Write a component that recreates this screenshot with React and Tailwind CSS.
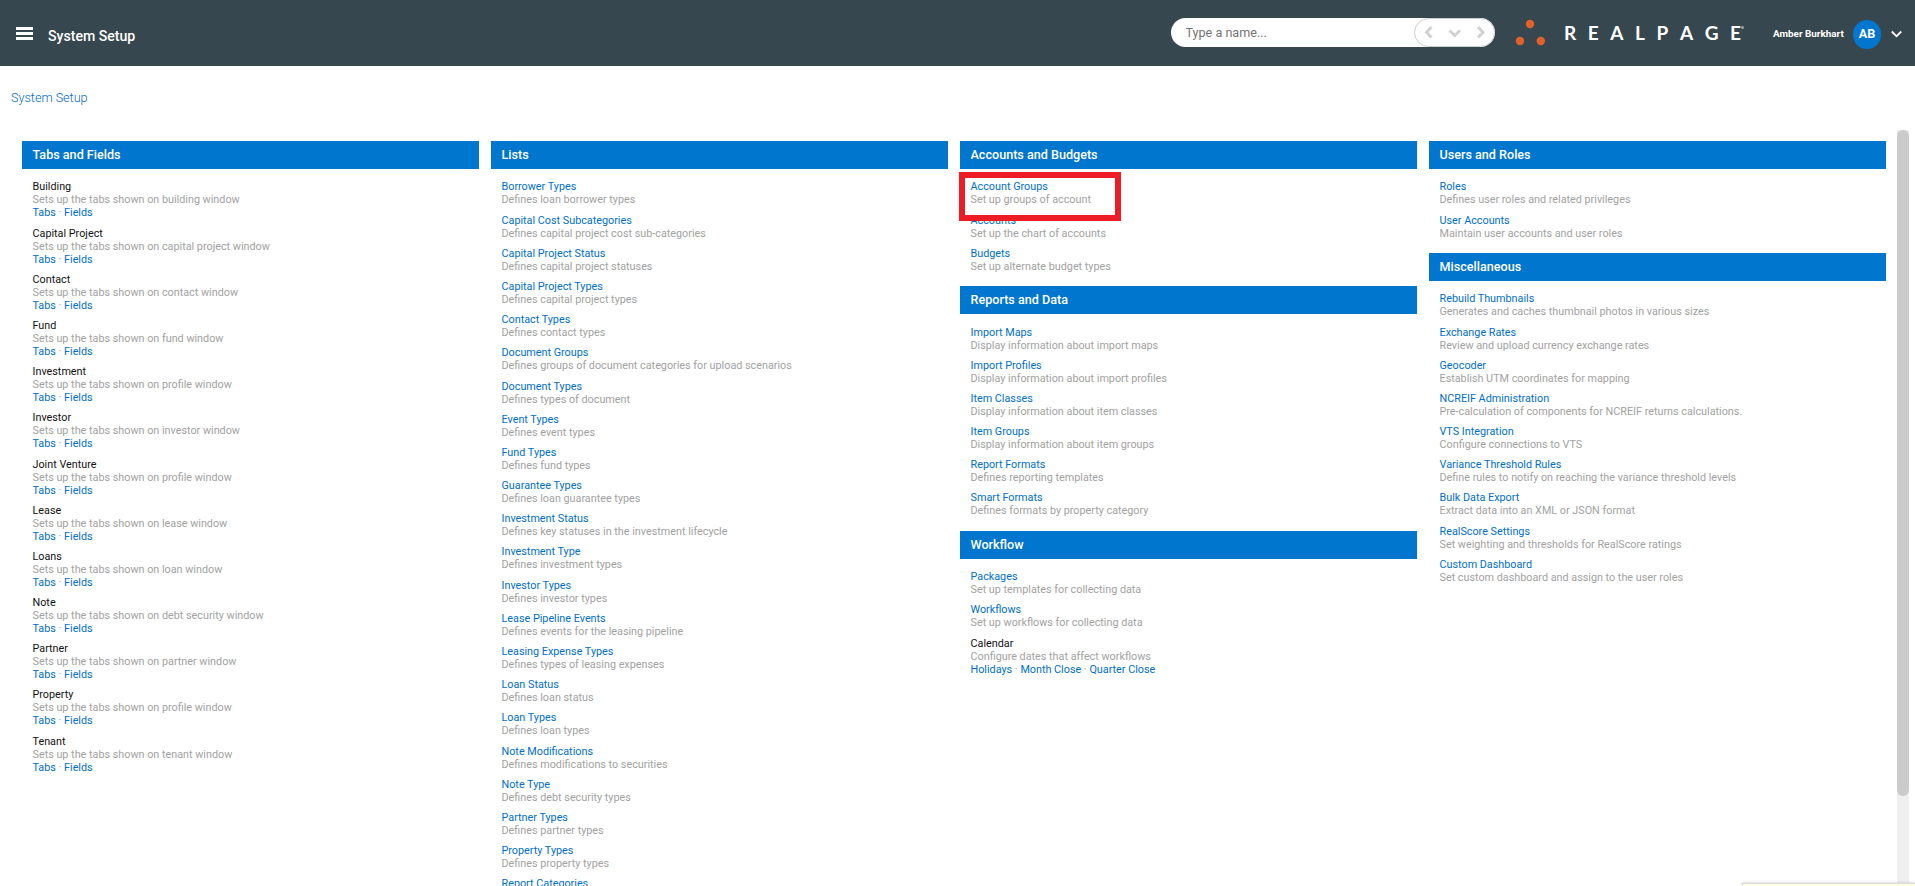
import { useState } from "react";

/* ---------- DATA ---------- */
const tabItem = (title, name) => ({
  title,
  text: `Sets up the tabs shown on ${name} window`,
  links: ["Tabs", "Fields"],
});

const columns = [
  [
    {
      name: "Tabs and Fields",
      items: [
        tabItem("Building", "building"),
        tabItem("Capital Project", "capital project"),
        tabItem("Contact", "contact"),
        tabItem("Fund", "fund"),
        tabItem("Investment", "profile"),
        tabItem("Investor", "investor"),
        tabItem("Joint Venture", "profile"),
        tabItem("Lease", "lease"),
        tabItem("Loans", "loan"),
        tabItem("Note", "debt security"),
        tabItem("Partner", "partner"),
        tabItem("Property", "profile"),
        tabItem("Tenant", "tenant"),
      ],
    },
  ],
  [
    {
      name: "Lists",
      items: [
        { title: "Borrower Types", text: "Defines loan borrower types" },
        { title: "Capital Cost Subcategories", text: "Defines capital project cost sub-categories" },
        { title: "Capital Project Status", text: "Defines capital project statuses" },
        { title: "Capital Project Types", text: "Defines capital project types" },
        { title: "Contact Types", text: "Defines contact types" },
        { title: "Document Groups", text: "Defines groups of document categories for upload scenarios" },
        { title: "Document Types", text: "Defines types of document" },
        { title: "Event Types", text: "Defines event types" },
        { title: "Fund Types", text: "Defines fund types" },
        { title: "Guarantee Types", text: "Defines loan guarantee types" },
        { title: "Investment Status", text: "Defines key statuses in the investment lifecycle" },
        { title: "Investment Type", text: "Defines investment types" },
        { title: "Investor Types", text: "Defines investor types" },
        { title: "Lease Pipeline Events", text: "Defines events for the leasing pipeline" },
        { title: "Leasing Expense Types", text: "Defines types of leasing expenses" },
        { title: "Loan Status", text: "Defines loan status" },
        { title: "Loan Types", text: "Defines loan types" },
        { title: "Note Modifications", text: "Defines modifications to securities" },
        { title: "Note Type", text: "Defines debt security types" },
        { title: "Partner Types", text: "Defines partner types" },
        { title: "Property Types", text: "Defines property types" },
        { title: "Report Categories" },
      ],
    },
  ],
  [
    {
      name: "Accounts and Budgets",
      items: [
        { title: "Account Groups", text: "Set up groups of account", marked: true },
        { title: "Accounts", text: "Set up the chart of accounts" },
        { title: "Budgets", text: "Set up alternate budget types" },
      ],
    },
    {
      name: "Reports and Data",
      items: [
        { title: "Import Maps", text: "Display information about import maps" },
        { title: "Import Profiles", text: "Display information about import profiles" },
        { title: "Item Classes", text: "Display information about item classes" },
        { title: "Item Groups", text: "Display information about item groups" },
        { title: "Report Formats", text: "Defines reporting templates" },
        { title: "Smart Formats", text: "Defines formats by property category" },
      ],
    },
    {
      name: "Workflow",
      items: [
        { title: "Packages", text: "Set up templates for collecting data" },
        { title: "Workflows", text: "Set up workflows for collecting data" },
        {
          title: "Calendar",
          text: "Configure dates that affect workflows",
          links: ["Holidays", "Month Close", "Quarter Close"],
        },
      ],
    },
  ],
  [
    {
      name: "Users and Roles",
      items: [
        { title: "Roles", text: "Defines user roles and related privileges" },
        { title: "User Accounts", text: "Maintain user accounts and user roles" },
      ],
    },
    {
      name: "Miscellaneous",
      items: [
        { title: "Rebuild Thumbnails", text: "Generates and caches thumbnail photos in various sizes" },
        { title: "Exchange Rates", text: "Review and upload currency exchange rates" },
        { title: "Geocoder", text: "Establish UTM coordinates for mapping" },
        { title: "NCREIF Administration", text: "Pre-calculation of components for NCREIF returns calculations." },
        { title: "VTS Integration", text: "Configure connections to VTS" },
        { title: "Variance Threshold Rules", text: "Define rules to notify on reaching the variance threshold levels" },
        { title: "Bulk Data Export", text: "Extract data into an XML or JSON format" },
        { title: "RealScore Settings", text: "Set weighting and thresholds for RealScore ratings" },
        { title: "Custom Dashboard", text: "Set custom dashboard and assign to the user roles" },
      ],
    },
  ],
];

function Item({ item }) {
  return (
    <li className="relative mb-[7.2px] whitespace-nowrap">
      {item.links ? (
        <div className="text-[#111]">{item.title}</div>
      ) : (
        <a href="#" className="block w-fit text-[#006fcb]">{item.title}</a>
      )}
      {item.text && <div className="text-[#a2a2a2]">{item.text}</div>}
      {item.links && (
        <div className="text-[#a2a2a2]">
          {item.links.map((link, i) => (
            <span key={link}>
              {i > 0 && " · "}
              <a href="#" className="text-[#006fcb]">{link}</a>
            </span>
          ))}
        </div>
      )}
      {item.marked && (
        <div className="absolute -left-[11.5px] -top-[8.4px] z-10 h-[49px] w-[162px] border-6 border-[#ed1c24]" />
      )}
    </li>
  );
}

function Section({ section }) {
  return (
    <section>
      <h2 className="h-7 bg-[#0076ce] pl-[10.5px] text-[12.6px] leading-[27px] font-medium text-white">
        {section.name}
      </h2>
      <ul className="pt-[11.4px] pb-[6.2px] pl-[10.5px] text-[10.8px] leading-[13px]">
        {section.items.map((item) => (
          <Item key={item.title} item={item} />
        ))}
      </ul>
    </section>
  );
}

function Header({ search, onSearch }) {
  return (
    <header className="flex h-[66px] shrink-0 items-start bg-[#37474f] text-white">
      <button className="mt-[27px] ml-4 flex w-[17px] flex-col gap-[2px]">
        <span className="h-[3px] w-full bg-white" />
        <span className="h-[3px] w-full bg-white" />
        <span className="h-[3px] w-full bg-white" />
      </button>
      <h1 className="mt-[26px] ml-[15px] text-[14.1px] leading-5 font-medium">System Setup</h1>

      {/* SEARCH */}
      <div className="mt-[18px] ml-auto flex h-[29px] w-[324px] overflow-hidden rounded-full bg-white">
        <input
          value={search}
          onChange={(e) => onSearch(e.target.value)}
          placeholder="Type a name..."
          className="w-[243px] pt-[2px] pl-[14.5px] text-[12.6px] text-gray-700 outline-none placeholder:text-[#757575]"
        />
        <div className="flex w-[81px] items-center rounded-full border border-[#ccc]">
          <svg className="h-full w-full" viewBox="0 0 79 27" fill="none" stroke="#d2d2d2" strokeWidth="3">
            <path d="M16.5 8 L11.5 13.2 L16.5 18.5" />
            <path d="M34.5 11.5 L39.7 16.5 L45 11.5" />
            <path d="M63 8 L68 13.2 L63 18.5" />
          </svg>
        </div>
      </div>

      {/* LOGO */}
      <svg className="mt-[19px] ml-[20px] h-7 w-[31px]" viewBox="0 0 31 28" fill="#e0622a">
        <circle cx="15" cy="5" r="4.2" />
        <circle cx="5" cy="22" r="4.2" />
        <circle cx="25.8" cy="22" r="4.2" />
      </svg>
      <div className="relative mt-[23px] mr-1 ml-[18px] flex w-[177px] justify-between font-[Lato] text-[19px] leading-5 font-bold">
        {"REALPAGE".split("").map((letter, i) => (
          <span key={i}>{letter}</span>
        ))}
        <span className="absolute top-[3px] -right-[3px] size-[3px] rounded-full bg-white/50" />
      </div>

      {/* USER */}
      <div className="mt-[26px] ml-[28px] w-[71px] text-[9.9px] leading-4 font-bold whitespace-nowrap">
        Amber Burkhart
      </div>
      <div className="mt-5 ml-[9px] flex h-[29px] w-7 items-center justify-center rounded-full bg-[#0076ce] text-[12.6px] font-bold">
        AB
      </div>
      <svg className="mt-[29px] mr-[13px] ml-[10px] h-[10px] w-[11px]" viewBox="0 0 11 10" fill="none" stroke="#fff" strokeWidth="1.8">
        <path d="M0.8 2.5 L5.5 7.3 L10.2 2.5" />
      </svg>
    </header>
  );
}

export default function App() {
  const [search, setSearch] = useState("");

  return (
    <div className="relative flex h-[886px] w-[1915px] flex-col overflow-hidden bg-white font-[Roboto,sans-serif]">
      <Header search={search} onSearch={setSearch} />

      <nav className="h-16 shrink-0 pt-[22px] pl-[11px] text-[12.6px] leading-5 font-light">
        <a href="#" className="text-[#006bc9]">System Setup</a>
      </nav>

      <div className="flex min-h-0 flex-1">
        <main className="grid w-[1897px] grid-cols-[repeat(4,457px)] content-start gap-x-3 overflow-hidden pt-[11px] pl-[22px]">
          {columns.map((sections, i) => (
            <div key={i} className="flex flex-col">
              {sections.map((section) => (
                <Section key={section.name} section={section} />
              ))}
            </div>
          ))}
        </main>

        {/* SCROLLBAR */}
        <div className="w-3 bg-[#efefef]">
          <div className="h-[666px] rounded-full bg-[#cbcbcb]" />
        </div>
      </div>

      {/* STATUS POPUP */}
      <div className="absolute right-0 bottom-0 h-[3px] w-[173px] border-t border-l border-[#ddd] bg-[#ffffe1] shadow-[0_0_3px_#bbb]" />
    </div>
  );
}
